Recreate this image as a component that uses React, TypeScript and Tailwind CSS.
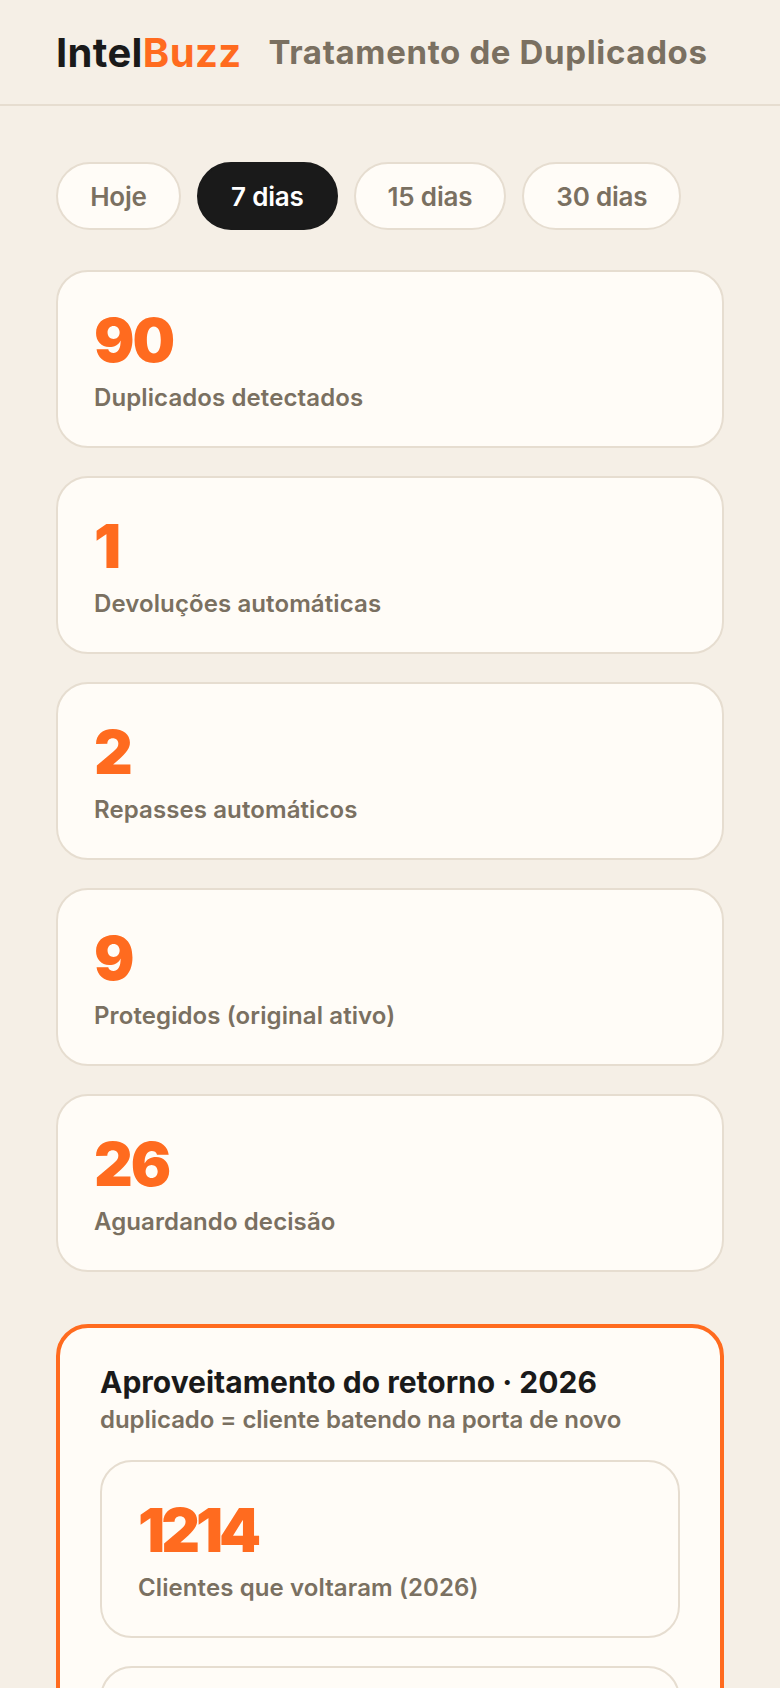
const periods = ['Hoje', '7 dias', '15 dias', '30 dias'];

const stats = [
  { value: '90', label: 'Duplicados detectados' },
  { value: '1', label: 'Devoluções automáticas' },
  { value: '2', label: 'Repasses automáticos' },
  { value: '9', label: 'Protegidos (original ativo)' },
  { value: '26', label: 'Aguardando decisão' },
];

function StatCard({ value, label }: { value: string; label: string }) {
  return (
    <div className="h-[178px] rounded-[32px] border-2 border-[#e6ddd0] bg-[#fffcf7] px-[36px] pt-[35px]">
      <div className={value.length > 2 ? 'text-[60px] leading-[66px] font-black tracking-[-4px] text-[#ff6b1f]' : 'text-[60px] leading-[66px] font-black tracking-[-2px] text-[#ff6b1f]'}>{value}</div>
      <div className="mt-[9px] text-[24px] leading-[32px] font-semibold tracking-[0.1px] text-[#7a7061]">{label}</div>
    </div>
  );
}

export default function App() {
  return (
    <div className="h-[1688px] overflow-hidden bg-[#f5efe6] font-['Inter',sans-serif]">
      <header className="flex h-[106px] items-center gap-[27px] border-b-2 border-[#e6ddd0] px-[56px] pt-[2px]">
        <div className="text-[40px] font-bold tracking-[0.35px] text-[#1a1a1a]">
          Intel<span className="text-[#ff6b1f]">Buzz</span>
        </div>
        <div className="text-[33px] font-bold tracking-[0.65px] text-[#7a7061]">Tratamento de Duplicados</div>
      </header>

      <main className="px-[56px] pt-[56px]">
        <div className="flex gap-[16px]">
          {periods.map((p) => (
            <button
              key={p}
              className={
                p === '7 dias'
                  ? 'h-[68px] rounded-full border-2 border-[#1a1a1a] bg-[#1a1a1a] px-[32px] text-[26px] font-semibold tracking-[-0.2px] text-white'
                  : 'h-[68px] min-w-[125px] rounded-full border-2 border-[#e6ddd0] bg-[#fffcf7] px-[32px] text-[26px] font-semibold tracking-[-0.2px] text-[#7a7061]'
              }
            >
              {p}
            </button>
          ))}
        </div>

        <div className="mt-[40px] flex flex-col gap-[28px]">
          {stats.map((s) => (
            <StatCard key={s.label} value={s.value} label={s.label} />
          ))}
        </div>

        <section className="mt-[52px] rounded-[32px] border-4 border-[#ff6b1f] bg-[#fffcf7] px-[40px] pt-[35px] pb-[40px]">
          <h2 className="text-[30px] leading-[38px] font-bold text-[#1a1a1a]">Aproveitamento do retorno · 2026</h2>
          <p className="mt-[2px] text-[24px] leading-[34px] font-semibold tracking-[-0.05px] text-[#7a7061]">duplicado = cliente batendo na porta de novo</p>
          <div className="mt-[23px] flex flex-col gap-[28px]">
            <StatCard value="1214" label="Clientes que voltaram (2026)" />
            <div className="h-[178px] rounded-[32px] border-2 border-[#e6ddd0] bg-[#fffcf7]" />
          </div>
        </section>
      </main>
    </div>
  );
}
